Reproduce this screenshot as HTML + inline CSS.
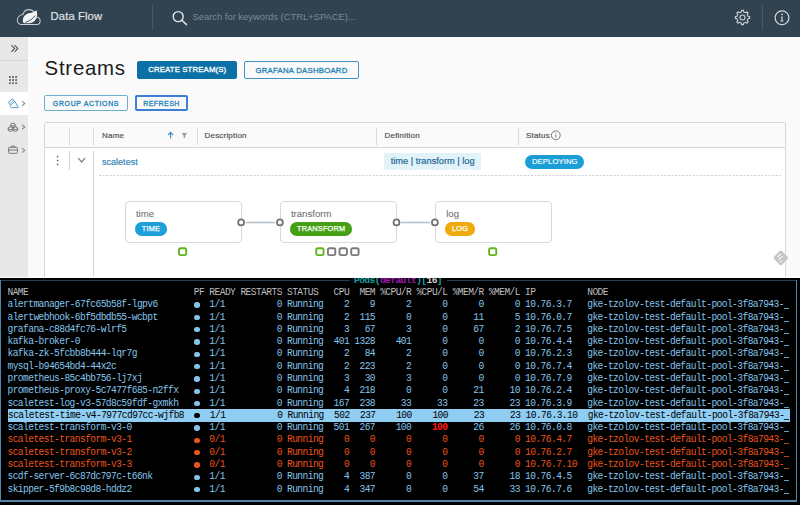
<!DOCTYPE html>
<html><head><meta charset="utf-8">
<style>
*{box-sizing:border-box;margin:0;padding:0}
html,body{width:800px;height:505px;overflow:hidden;background:#fafafa;font-family:"Liberation Sans",sans-serif}
.abs{position:absolute}
#hdr{position:absolute;left:0;top:0;width:800px;height:36.5px;background:#314350}
.hdiv{position:absolute;top:5px;width:1px;height:25px;background:#4b5966}
#brand{position:absolute;left:50.5px;top:10.3px;font-size:11.3px;letter-spacing:0.1px;-webkit-text-stroke:0.15px #e4e6e8;line-height:13px;color:#e4e6e8;white-space:pre}
#search{position:absolute;left:192.5px;top:11px;font-size:9.4px;line-height:12px;color:#7d8994;white-space:pre;letter-spacing:0px}
#side{position:absolute;left:0;top:36.5px;width:28px;height:242px;background:#e8e8e8;border-right:1px solid #fdfdfd;width:29px}
.sdiv{position:absolute;left:0;top:60px;width:28px;height:1px;background:#d6d6d6}
#active{position:absolute;left:0;top:91.5px;width:28px;height:23.5px;background:#fff}
#title{position:absolute;left:44.6px;top:57.5px;font-size:20.4px;line-height:20px;color:#1b1b1b;letter-spacing:0.75px;white-space:pre}
.btn{position:absolute;white-space:pre;text-align:center;border-radius:2px}
.grid{position:absolute;left:44px;top:122px;width:742px;height:170px;background:#fff;border:1px solid #d7d7d7;border-radius:2px}
.gh{position:absolute;left:0;top:0;width:740px;height:25px;background:#fafafa;border-bottom:1px solid #d7d7d7}
.csep{position:absolute;top:4.5px;width:1px;height:17px;background:#d9d9d9}
.hl{position:absolute;top:7.5px;font-size:8px;line-height:9px;color:#565656;white-space:pre;letter-spacing:0.2px;-webkit-text-stroke:0.2px #565656}
.node{position:absolute;top:201px;height:42px;border:1px solid #d9d9d9;border-radius:4px;background:#fff}
.ntitle{position:absolute;left:10.3px;top:5.8px;font-size:9.6px;line-height:11px;color:#666;white-space:pre}
.badge{position:absolute;left:9.5px;top:20px;height:13.6px;border-radius:6.8px;color:#fff;font-size:7.3px;line-height:13.8px;text-align:center;white-space:pre;letter-spacing:0.22px;-webkit-text-stroke:0.25px #fff}
.port{position:absolute;top:218.55px;width:7.7px;height:7.7px;border:1.8px solid #737373;border-radius:50%;background:#fff}
.conn{position:absolute;top:221.7px;height:1.6px;background:#b6c3cc}
.sq{position:absolute;top:247.4px;width:9px;height:8.5px;border:2px solid #888;border-radius:2px;background:#fff}
.sq.g{border-color:#62b41c}
#term{position:absolute;left:0;top:278px;width:800px;height:227px;background:#000;overflow:hidden}
.tl{position:absolute;left:7.5px;height:12.26px;line-height:12.26px;font-family:"Liberation Mono",monospace;font-size:9.6px;letter-spacing:-0.5813px;white-space:pre;color:#85c4ea}
.tx{display:inline-block;transform:scaleY(1.1);transform-origin:0 8.7px}
.th{color:#bdbdbd}
.err{color:#ea541d}
.sel{background:#8fcdf3;color:#000;left:8px;margin-top:-1px;padding-top:1px;height:13.26px;width:781.5px}
.hot{color:#ff1a10;font-weight:bold}
.dot{position:absolute;left:186.7px;top:3.2px;width:5.4px;height:5.4px;border-radius:50%;background:currentColor}
.sel .dot{left:186.2px;top:4.2px}
.ell{position:absolute;left:776.5px;top:9px;width:4.5px;height:1px;background:currentColor;opacity:.8}
.sel .ell{left:776px;top:10px}
</style></head><body>

<!-- HEADER -->
<div id="hdr">
  <svg class="abs" style="left:0;top:0" width="60" height="36" viewBox="0 0 60 36">
    <path d="M21.6,24.5 H37 C39,24.5 40.1,23 40.1,21 C40.1,18.9 38.7,17.1 36.3,16.9 C35.8,12.4 32.7,9.6 29.2,9.6 C26.1,9.6 23.8,11.4 22.9,14.4 C19.8,14.7 17.4,17.2 17.4,20.2 C17.4,22.7 19.3,24.5 21.6,24.5 Z" fill="none" stroke="#cdd1d5" stroke-width="1.05"/>
    <path d="M23.4,22.9 C21.6,18.6 24.2,14.3 29.6,13.1 C32.4,12.5 34.6,11.8 36.5,10.2 C38.2,15.6 36.6,21.6 30.6,22.9 C28.2,23.4 25.6,23.3 23.4,22.9 Z" fill="#f2f3f4"/>
    <path d="M25.2,22.4 C29.4,21.2 32.9,18.8 35.1,15.6" fill="none" stroke="#314350" stroke-width="0.9"/>
  </svg>
  <div id="brand">Data Flow</div>
  <div class="hdiv" style="left:152px"></div>
  <svg class="abs" style="left:170px;top:9px" width="20" height="18" viewBox="0 0 20 18">
    <circle cx="8.2" cy="7.6" r="5" fill="none" stroke="#e2e4e6" stroke-width="1.4"/>
    <path d="M11.8,11.2 L16.6,15.6" stroke="#e2e4e6" stroke-width="1.5" stroke-linecap="round"/>
  </svg>
  <div id="search">Search for keywords (CTRL+SPACE)...</div>
  <svg class="abs" style="left:733px;top:8px" width="19" height="19" viewBox="0 0 19 19">
    <path d="M7.36,4.33 L8.28,4.03 L8.60,2.36 L10.40,2.36 L10.72,4.03 L11.64,4.33 L12.50,4.77 L13.91,3.81 L15.19,5.09 L14.23,6.50 L14.67,7.36 L14.97,8.28 L16.64,8.60 L16.64,10.40 L14.97,10.72 L14.67,11.64 L14.23,12.50 L15.19,13.91 L13.91,15.19 L12.50,14.23 L11.64,14.67 L10.72,14.97 L10.40,16.64 L8.60,16.64 L8.28,14.97 L7.36,14.67 L6.50,14.23 L5.09,15.19 L3.81,13.91 L4.77,12.50 L4.33,11.64 L4.03,10.72 L2.36,10.40 L2.36,8.60 L4.03,8.28 L4.33,7.36 L4.77,6.50 L3.81,5.09 L5.09,3.81 L6.50,4.77 Z" fill="none" stroke="#cfd3d7" stroke-width="1.1" stroke-linejoin="round"/>
    <circle cx="9.5" cy="9.5" r="2.5" fill="none" stroke="#cfd3d7" stroke-width="1.1"/>
  </svg>
  <div class="hdiv" style="left:762px"></div>
  <svg class="abs" style="left:773px;top:9px" width="18" height="18" viewBox="0 0 18 18">
    <circle cx="9" cy="8.8" r="6.9" fill="none" stroke="#d4d7da" stroke-width="1.2"/>
    <circle cx="9" cy="5.3" r="0.9" fill="#d4d7da"/>
    <path d="M8.1,7.4 H9.6 V11.6 H10.4 V12.6 H7.5 V11.6 H8.4 V8.4 H8.1 Z" fill="#d4d7da"/>
  </svg>
</div>

<!-- SIDEBAR -->
<div id="side"></div>
<div class="sdiv"></div>
<div id="active"></div>
<svg class="abs" style="left:0;top:36px" width="29" height="242" viewBox="0 36 29 242">
  <!-- double chevron -->
  <path d="M11.4,45.2 L14.6,48.5 L11.4,51.8 M14.6,45.2 L17.8,48.5 L14.6,51.8" fill="none" stroke="#555" stroke-width="1.1"/>
  <!-- grid -->
  <g fill="#6e6e6e"><rect x="9.0" y="76.0" width="1.9" height="1.9"/><rect x="12.1" y="76.0" width="1.9" height="1.9"/><rect x="15.2" y="76.0" width="1.9" height="1.9"/><rect x="9.0" y="79.1" width="1.9" height="1.9"/><rect x="12.1" y="79.1" width="1.9" height="1.9"/><rect x="15.2" y="79.1" width="1.9" height="1.9"/><rect x="9.0" y="82.2" width="1.9" height="1.9"/><rect x="12.1" y="82.2" width="1.9" height="1.9"/><rect x="15.2" y="82.2" width="1.9" height="1.9"/></g>
  <!-- streams icon -->
  <g fill="none" stroke="#5aa2cc" stroke-width="1" stroke-linejoin="round">
    <path d="M8.2,102.3 L12.3,98.9 L14.9,101.4 L10.6,105.2 Z"/>
    <path d="M9.6,103.9 L13.6,100.2"/>
    <path d="M14.9,101.4 L18.3,107.7 H11.6 C10.4,107.7 10.1,106.2 10.9,105.4"/>
  </g>
  <path d="M22.1,101.2 L24.8,103.5 L22.1,105.8" fill="none" stroke="#8f8f8f" stroke-width="1.1"/>
  <!-- tasks icon -->
  <g fill="none" stroke="#777" stroke-width="1">
    <ellipse cx="12.9" cy="124.6" rx="2.2" ry="1.4"/>
    <path d="M10.7,124.6 V126.6 C10.7,127.8 15.1,127.8 15.1,126.6 V124.6"/>
    <ellipse cx="10.5" cy="128.2" rx="2.3" ry="1.4"/>
    <path d="M8.2,128.2 V130.2 C8.2,131.6 12.8,131.6 12.8,130.2 V128.2"/>
    <ellipse cx="15.3" cy="128.2" rx="2.3" ry="1.4"/>
    <path d="M13,128.2 V130.2 C13,131.6 17.6,131.6 17.6,130.2 V128.2"/>
  </g>
  <path d="M22.1,124.8 L24.8,127 L22.1,129.2" fill="none" stroke="#8f8f8f" stroke-width="1.1"/>
  <!-- briefcase -->
  <g fill="none" stroke="#777" stroke-width="1">
    <rect x="8.6" y="147.3" width="8.8" height="6" rx="0.8"/>
    <path d="M11.4,147.3 V146.1 H14.6 V147.3"/>
    <path d="M8.6,150 H17.4"/>
  </g>
  <path d="M22.1,148.2 L24.8,150.4 L22.1,152.6" fill="none" stroke="#8f8f8f" stroke-width="1.1"/>
</svg>

<!-- CONTENT -->
<div id="title">Streams</div>
<div class="btn" style="left:137px;top:61px;width:100px;height:18px;background:#0b70a5;color:#fff;font-size:7.8px;line-height:18px;letter-spacing:0.12px;-webkit-text-stroke:0.3px #fff;padding-left:0.5px">CREATE STREAM(S)</div>
<div class="btn" style="left:244px;top:61px;width:115px;height:18px;border:1px solid #3f93c2;color:#2583b5;font-size:7.8px;line-height:16px;padding-top:0.9px;letter-spacing:0.22px;-webkit-text-stroke:0.3px #2583b5">GRAFANA DASHBOARD</div>
<div class="btn" style="left:44px;top:95px;width:84px;height:15.5px;border:1px solid #6aaed0;color:#2583b5;font-size:7px;line-height:13.5px;padding-top:1px;letter-spacing:0.62px;-webkit-text-stroke:0.3px #2583b5">GROUP ACTIONS</div>
<div class="btn" style="left:135px;top:95px;width:53px;height:15.5px;border:2px solid #3a80d8;color:#2583b5;font-size:7px;line-height:11.5px;letter-spacing:0.45px;-webkit-text-stroke:0.3px #2583b5;padding-top:1.2px">REFRESH</div>

<!-- DATAGRID -->
<div class="grid">
  <div class="gh"></div>
  <div class="csep" style="left:24px"></div>
  <div class="csep" style="left:48px"></div>
  <div class="csep" style="left:151.5px"></div>
  <div class="csep" style="left:330.5px"></div>
  <div class="csep" style="left:472.5px"></div>
  <div class="hl" style="left:57px">Name</div>
  <div class="hl" style="left:159.5px">Description</div>
  <div class="hl" style="left:339.5px">Definition</div>
  <div class="hl" style="left:481px">Status</div>
  <!-- row -->
  <div class="csep" style="left:24px;top:28px;height:19px"></div>
  <div class="csep" style="left:48px;top:28px;height:150px"></div>
</div>
<svg class="abs" style="left:0;top:0" width="800" height="278" viewBox="0 0 800 278">
  <!-- sort arrow -->
  <path d="M170.6,138.2 V132.6 M168.2,135 L170.6,132.4 L173,135" fill="none" stroke="#3f95c8" stroke-width="1.2"/>
  <!-- filter -->
  <path d="M181.6,133.1 H187.2 L185.2,135.4 V137.8 H183.6 V135.4 Z" fill="#9a9a9a"/>
  <!-- info -->
  <circle cx="555.8" cy="135.3" r="4.4" fill="none" stroke="#666" stroke-width="0.9"/>
  <rect x="555.35" y="134.5" width="0.9" height="3" fill="#666"/>
  <circle cx="555.8" cy="133.1" r="0.5" fill="#666"/>
  <!-- kebab -->
  <g fill="#666"><circle cx="57.6" cy="156.6" r="0.85"/><circle cx="57.6" cy="160.5" r="0.85"/><circle cx="57.6" cy="164.4" r="0.85"/></g>
  <!-- chevron down -->
  <path d="M78.2,158.2 L81.6,161.8 L85,158.2" fill="none" stroke="#707070" stroke-width="1.15"/>
  <!-- dashed line -->
  <line x1="99" y1="175.5" x2="781" y2="175.5" stroke="#cfcfcf" stroke-width="1" stroke-dasharray="2,1.6"/>
  <!-- diamond -->
  <g transform="translate(780.8,257.9) rotate(45)">
    <rect x="-5.6" y="-5.6" width="11.2" height="11.2" rx="1.6" fill="#c6c6c6"/>
  </g>
  <path d="M777.5,257 L781.2,253.8 M778.7,259.6 L782.4,256.4 M780,262.2 L781.8,260.6" stroke="#fff" stroke-width="1.1"/>
</svg>
<div class="abs" style="left:102px;top:156.8px;font-size:9.05px;line-height:11px;color:#2e83b5;-webkit-text-stroke:0.15px #2e83b5;white-space:pre">scaletest</div>
<div class="abs" style="left:384px;top:153px;width:97px;height:17.3px;background:#e1f2f9;border-radius:2px"></div>
<div class="abs" style="left:390.7px;top:155.4px;font-size:9.25px;line-height:12px;color:#1f6b95;-webkit-text-stroke:0.2px #1f6b95;white-space:pre">time | transform | log</div>
<div class="abs" style="left:525.3px;top:155.4px;width:59px;height:13.2px;background:#1b9dd6;border-radius:7px;color:#fff;font-size:7.7px;line-height:13.4px;text-align:center;white-space:pre;letter-spacing:0.1px;-webkit-text-stroke:0.15px #fff">DEPLOYING</div>

<!-- GRAPH -->
<div class="node" style="left:124.6px;width:117.3px"><div class="ntitle">time</div><div class="badge" style="width:31.6px;background:#1e9fd9">TIME</div></div>
<div class="node" style="left:279.6px;width:117.3px"><div class="ntitle">transform</div><div class="badge" style="width:62.2px;background:#45a015">TRANSFORM</div></div>
<div class="node" style="left:434.9px;width:117px"><div class="ntitle">log</div><div class="badge" style="width:29.3px;background:#efaa0c">LOG</div></div>
<svg class="abs" style="left:0;top:0" width="800" height="278" viewBox="0 0 800 278">
  <g stroke="#b6c3cc" stroke-width="1.6"><line x1="246" y1="222.5" x2="275" y2="222.5"/><line x1="401.3" y1="222.5" x2="430.3" y2="222.5"/></g>
  <g fill="#fff" stroke="#737373" stroke-width="1.8">
    <circle cx="241.1" cy="222.4" r="2.95"/><circle cx="279.9" cy="222.4" r="2.95"/><circle cx="396.5" cy="222.4" r="2.95"/><circle cx="434.9" cy="222.4" r="2.95"/>
  </g>
  <g fill="#fff" stroke-width="1.9">
    <rect x="179" y="248.3" width="7.2" height="6.8" rx="1.6" stroke="#62b41c"/>
    <rect x="316.2" y="248.3" width="7.4" height="6.8" rx="1.6" stroke="#62b41c"/>
    <rect x="327.9" y="248.3" width="7.4" height="6.8" rx="1.6" stroke="#7a7a7a"/>
    <rect x="339.5" y="248.3" width="7.4" height="6.8" rx="1.6" stroke="#7a7a7a"/>
    <rect x="351.2" y="248.3" width="7.4" height="6.8" rx="1.6" stroke="#7a7a7a"/>
    <rect x="489.1" y="248.3" width="7.2" height="6.8" rx="1.6" stroke="#62b41c"/>
  </g>
</svg>

<div class="abs" style="left:0;top:277px;width:800px;height:1px;background:#fdfdfd"></div>
<!-- TERMINAL -->
<div id="term">
  <div class="abs" style="left:0;top:1.6px;width:349.5px;height:1.4px;background:#243f54"></div>
  <div class="abs" style="left:446.5px;top:1.6px;width:350px;height:1.4px;background:#243f54"></div>
  <div class="abs" style="left:0;top:1.6px;width:1.3px;height:222.4px;background:#4f86ae"></div>
  <div class="abs" style="left:795.8px;top:1.6px;width:1.3px;height:222.4px;background:#4f86ae"></div>
  <div class="abs" style="left:0;top:221.8px;width:797.1px;height:2px;background:#4f86ae"></div>
  <div class="tl" style="left:354px;top:-2.9px;font-weight:bold"><span style="color:#16a3a3">Pods(</span><span style="color:#a416b4">default</span><span style="color:#16a3a3">)[</span><span style="color:#cfcfcf">16</span><span style="color:#16a3a3">]</span></div>
<div class="tl th" style="top:9.00px"><span class="tx">NAME                                PF READY RESTARTS STATUS   CPU  MEM %CPU/R %CPU/L %MEM/R %MEM/L IP          NODE                                   </span></div>
<div class="tl" style="top:21.29px"><span class="tx">alertmanager-67fc65b58f-lgpv6          1/1          0 Running    2    9      2      0      0      0 10.76.3.7   gke-tzolov-test-default-pool-3f8a7943- </span><i class="ell"></i><i class="dot"></i></div>
<div class="tl" style="top:33.58px"><span class="tx">alertwebhook-6bf5dbdb55-wcbpt          1/1          0 Running    2  115      0      0     11      5 10.76.0.7   gke-tzolov-test-default-pool-3f8a7943- </span><i class="ell"></i><i class="dot"></i></div>
<div class="tl" style="top:45.87px"><span class="tx">grafana-c88d4fc76-wlrf5                1/1          0 Running    3   67      3      0     67      2 10.76.7.5   gke-tzolov-test-default-pool-3f8a7943- </span><i class="ell"></i><i class="dot"></i></div>
<div class="tl" style="top:58.16px"><span class="tx">kafka-broker-0                         1/1          0 Running  401 1328    401      0      0      0 10.76.4.4   gke-tzolov-test-default-pool-3f8a7943- </span><i class="ell"></i><i class="dot"></i></div>
<div class="tl" style="top:70.45px"><span class="tx">kafka-zk-5fcbb8b444-lqr7g              1/1          0 Running    2   84      2      0      0      0 10.76.2.3   gke-tzolov-test-default-pool-3f8a7943- </span><i class="ell"></i><i class="dot"></i></div>
<div class="tl" style="top:82.74px"><span class="tx">mysql-b94654bd4-44x2c                  1/1          0 Running    2  223      2      0      0      0 10.76.7.4   gke-tzolov-test-default-pool-3f8a7943- </span><i class="ell"></i><i class="dot"></i></div>
<div class="tl" style="top:95.03px"><span class="tx">prometheus-85c4bb756-lj7xj             1/1          0 Running    3   30      3      0      0      0 10.76.7.9   gke-tzolov-test-default-pool-3f8a7943- </span><i class="ell"></i><i class="dot"></i></div>
<div class="tl" style="top:107.32px"><span class="tx">prometheus-proxy-5c7477f685-n2ffx      1/1          0 Running    4  218      0      0     21     10 10.76.2.4   gke-tzolov-test-default-pool-3f8a7943- </span><i class="ell"></i><i class="dot"></i></div>
<div class="tl" style="top:119.61px"><span class="tx">scaletest-log-v3-57d8c59fdf-gxmkh      1/1          0 Running  167  238     33     33     23     23 10.76.3.9   gke-tzolov-test-default-pool-3f8a7943- </span><i class="ell"></i><i class="dot"></i></div>
<div class="tl sel" style="top:131.90px"><span class="tx">scaletest-time-v4-7977cd97cc-wjfb8     1/1          0 Running  502  237    100    100     23     23 10.76.3.10  gke-tzolov-test-default-pool-3f8a7943- </span><i class="ell"></i><i class="dot"></i></div>
<div class="tl" style="top:144.19px"><span class="tx">scaletest-transform-v3-0               1/1          0 Running  501  267    100    <b class="hot">100</b>     26     26 10.76.0.8   gke-tzolov-test-default-pool-3f8a7943- </span><i class="ell"></i><i class="dot"></i></div>
<div class="tl err" style="top:156.48px"><span class="tx">scaletest-transform-v3-1               0/1          0 Running    0    0      0      0      0      0 10.76.4.7   gke-tzolov-test-default-pool-3f8a7943- </span><i class="ell"></i><i class="dot"></i></div>
<div class="tl err" style="top:168.77px"><span class="tx">scaletest-transform-v3-2               0/1          0 Running    0    0      0      0      0      0 10.76.2.7   gke-tzolov-test-default-pool-3f8a7943- </span><i class="ell"></i><i class="dot"></i></div>
<div class="tl err" style="top:181.06px"><span class="tx">scaletest-transform-v3-3               0/1          0 Running    0    0      0      0      0      0 10.76.7.10  gke-tzolov-test-default-pool-3f8a7943- </span><i class="ell"></i><i class="dot"></i></div>
<div class="tl" style="top:193.35px"><span class="tx">scdf-server-6c87dc797c-t66nk           1/1          0 Running    4  387      0      0     37     18 10.76.4.5   gke-tzolov-test-default-pool-3f8a7943- </span><i class="ell"></i><i class="dot"></i></div>
<div class="tl" style="top:205.64px"><span class="tx">skipper-5f9b8c98d8-hddz2               1/1          0 Running    4  347      0      0     54     33 10.76.7.6   gke-tzolov-test-default-pool-3f8a7943- </span><i class="ell"></i><i class="dot"></i></div>
</div>
</body></html>
